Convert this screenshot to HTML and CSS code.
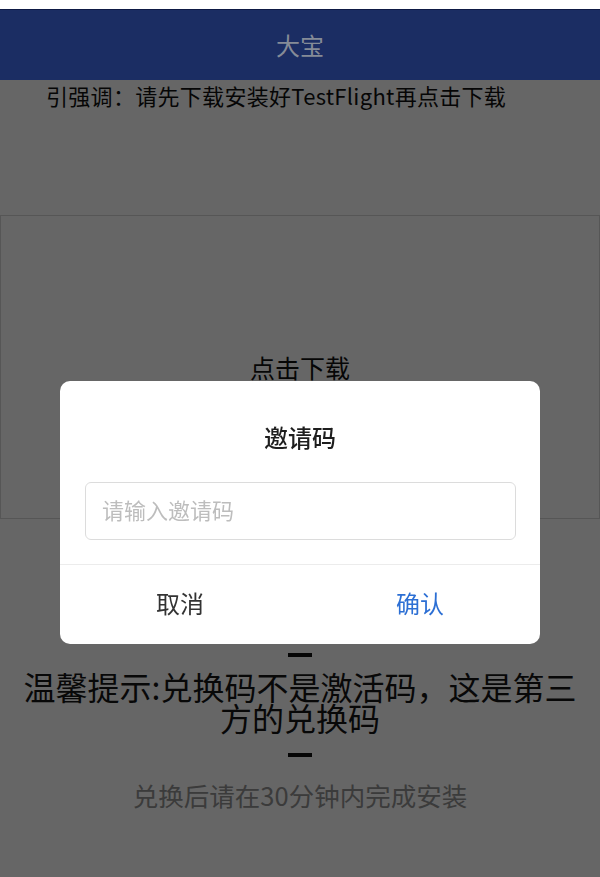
FILE: index.html
```html
<!DOCTYPE html>
<html lang="zh-CN">
<head>
<meta charset="utf-8">
<title>大宝</title>
<link rel="stylesheet" href="styles.css">
</head>
<body>
<div class="status"></div>
<header class="topbar"><span class="topbar-title">大宝</span></header>
<main class="page">
  <p class="notice">引强调：请先下载安装好TestFlight再点击下载</p>
  <div class="download-box"><span class="download-label">点击下载</span></div>
  <div class="tip">
    <div class="tip-bar"></div>
    <p class="tip-text">温馨提示:兑换码不是激活码，这是第三方的兑换码</p>
    <div class="tip-bar"></div>
    <p class="tip-sub">兑换后请在30分钟内完成安装</p>
  </div>
</main>
<div class="mask">
  <div class="dialog">
    <h2 class="dialog-title">邀请码</h2>
    <div class="dialog-body">
      <input class="dialog-input" type="text" placeholder="请输入邀请码">
    </div>
    <div class="dialog-actions">
      <button class="dialog-btn cancel">取消</button>
      <button class="dialog-btn confirm">确认</button>
    </div>
  </div>
</div>
</body>
</html>
```
FILE: styles.css
```css
html, body {
  margin: 0;
  padding: 0;
  background: #ffffff;
  font-family: "Noto Sans CJK SC", "Noto Sans", sans-serif;
  color: #111;
}

.status {
  height: 9px;
  background: #ffffff;
}

.topbar {
  height: 70px;
  border-top: 1px solid #0e1a45;
  background: #1b2d63;
  display: flex;
  align-items: center;
  justify-content: center;
}

.topbar-title {
  font-size: 24px;
  line-height: 30px;
  color: #858b97;
}

.page {
  display: flex;
  flex-direction: column;
}

.notice {
  margin: 0;
  padding-left: 46px;
  font-size: 22px;
  line-height: 30px;
  letter-spacing: 0.3px;
  color: #111;
}

.download-box {
  margin-top: 105px;
  height: 302px;
  border: 1px solid #d8d8d8;
  display: flex;
  align-items: center;
  justify-content: center;
}

.download-label {
  font-size: 25px;
  line-height: 32px;
  color: #111;
}

.tip {
  margin-top: 134px;
  display: flex;
  flex-direction: column;
  align-items: center;
}

.tip-bar {
  width: 24px;
  height: 4px;
  background: #111;
}

.tip-text {
  margin: 14px 0 20px;
  padding: 0 12px;
  font-size: 32px;
  line-height: 31px;
  text-align: center;
  color: #151515;
}

.tip-sub {
  margin: 20px 0 0;
  font-size: 25.5px;
  line-height: 36px;
  color: #939393;
}

.mask {
  position: fixed;
  top: 80px;
  left: 0;
  right: 0;
  bottom: 0;
  background: rgba(0, 0, 0, 0.6);
  display: flex;
  justify-content: center;
  align-items: flex-start;
  padding-top: 301px;
}

.dialog {
  width: 480px;
  background: #ffffff;
  border-radius: 10px;
  overflow: hidden;
}

.dialog-title {
  margin: 0;
  padding-top: 39px;
  font-size: 24px;
  line-height: 34px;
  font-weight: 500;
  text-align: center;
  color: #1e1e1e;
}

.dialog-body {
  padding: 28px 24px 24px 25px;
}

.dialog-input {
  display: block;
  box-sizing: border-box;
  width: 100%;
  height: 58px;
  margin: 0;
  padding: 0 0 4px 16px;
  border: 1px solid #dcdcdc;
  border-radius: 6px;
  font-family: "Noto Sans CJK SC", "Noto Sans", sans-serif;
  font-size: 22px;
  color: #333;
  outline: none;
}

.dialog-input::placeholder {
  color: #bdbdbd;
}

.dialog-actions {
  display: flex;
  border-top: 1px solid #ececec;
  height: 79px;
}

.dialog-btn {
  flex: 1;
  margin: 0;
  padding: 0 0 3px;
  border: none;
  background: transparent;
  font-family: "Noto Sans CJK SC", "Noto Sans", sans-serif;
  font-size: 24px;
  line-height: 34px;
}

.dialog-btn.cancel {
  color: #333333;
}

.dialog-btn.confirm {
  color: #2c6fd4;
}
```
